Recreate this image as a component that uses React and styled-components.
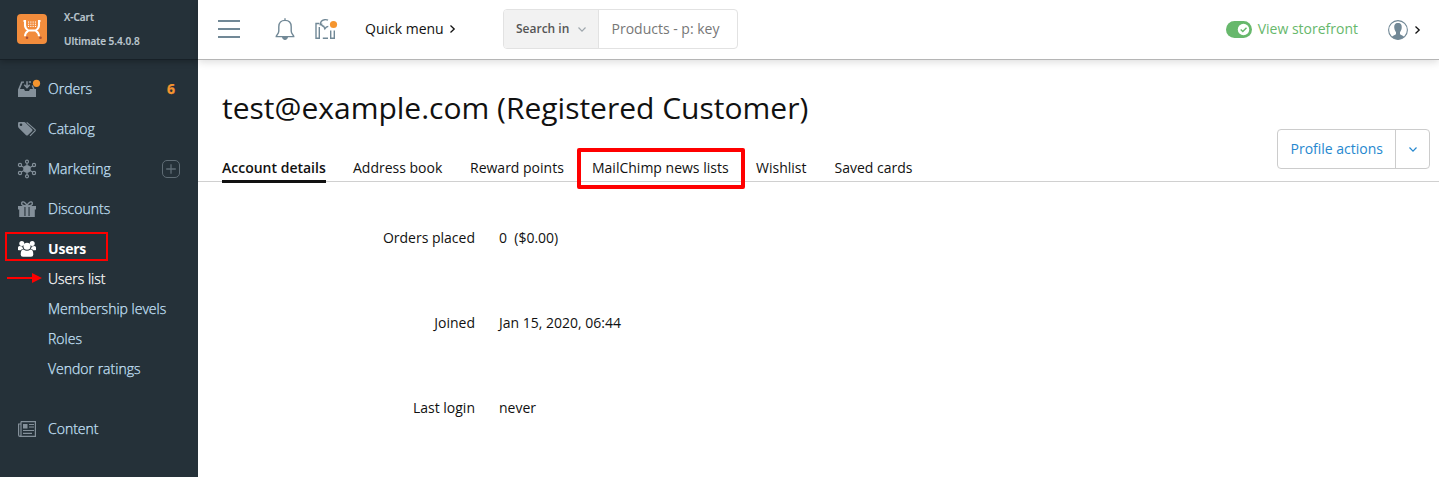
import React from "react";
import styled, { createGlobalStyle } from "styled-components";

const Global = createGlobalStyle`
  * { box-sizing: border-box; }
  html, body, #root { margin: 0; height: 100%; overflow: hidden; }
  body { font-family: "Open Sans", "Noto Sans", sans-serif; font-size: 14px; color: #111; background: #fff; }
  svg { display: block; flex: none; overflow: visible; }
`;

const Page = styled.div`
  display: flex;
  height: 477px;
  width: 1439px;
`;

const Sidebar = styled.aside`
  width: 198px;
  flex: none;
  background: #253139;
  color: #c5e0f8;
`;

const Brand = styled.div`
  display: flex;
  align-items: flex-start;
  height: 60px;
  padding: 14px 0 0 17px;
  border-bottom: 1px solid #172027;
  box-shadow: 0 2px 6px rgba(0, 0, 0, 0.25);
`;

const BrandText = styled.div`
  display: flex;
  flex-direction: column;
  gap: 8px;
  margin: -5px 0 0 17px;
  font-size: 10px;
  line-height: 16px;
  font-weight: 600;
  color: #bdc8d0;
  -webkit-text-stroke: 0.2px currentColor;
`;

const Nav = styled.nav`
  padding-top: 9px;
`;

const NavItem = styled.div`
  display: flex;
  align-items: center;
  position: relative;
  height: 40px;
  padding: 0 18px;
  color: ${(p) => (p.$active ? "#fff" : "#c5e0f8")};
  font-weight: ${(p) => (p.$active ? 700 : 300)};
  -webkit-text-stroke: ${(p) => (p.$active ? 0 : 0.25)}px currentColor;
  margin-top: ${(p) => p.$gap || 0}px;
`;

const NavLabel = styled.span`
  margin-left: 12px;
  padding-bottom: 2px;
  flex: 1;
  letter-spacing: ${(p) => p.$track || 0}px;
`;

const Count = styled.span`
  color: #f5952f;
  font-weight: 700;
  margin-right: 5px;
  padding-bottom: 2px;
`;

const SubItem = styled.div`
  height: 30px;
  line-height: 30px;
  padding-left: 48px;
  position: relative;
  font-weight: 300;
  color: ${(p) => (p.$active ? "#fff" : "#c5e0f8")};
  -webkit-text-stroke: 0.25px currentColor;
`;

const SubList = styled.div`
  margin-top: -5px;
`;

const Callout = styled.span`
  position: absolute;
  pointer-events: none;
  border: ${(p) => p.$line}px solid #f00;
  border-radius: ${(p) => p.$round || 0}px;
  top: ${(p) => p.$top}px;
  left: ${(p) => p.$left}px;
  width: ${(p) => p.$w}px;
  height: ${(p) => p.$h}px;
`;

const Arrow = styled.svg`
  position: absolute;
  left: 7px;
  top: 9px;
`;

const Main = styled.main`
  flex: 1;
  min-width: 0;
  background: #fff;
`;

const TopBar = styled.header`
  display: flex;
  align-items: center;
  height: 60px;
  padding: 0 19px 1px 20px;
  border-bottom: 1px solid #b5b5b5;
  box-shadow: 0 2px 8px rgba(0, 0, 0, 0.14);
`;

const QuickMenu = styled.div`
  display: flex;
  align-items: center;
  gap: 6px;
  width: 138px;
  margin-left: 27px;
`;

const BarText = styled.span`
  padding-bottom: 2px;
`;

const Search = styled.div`
  display: flex;
  width: 235px;
  height: 40px;
  border: 1px solid #e2e2e2;
  border-radius: 4px;
  overflow: hidden;
  line-height: 38px;
`;

const SearchScope = styled.div`
  display: flex;
  align-items: center;
  gap: 9px;
  width: 95px;
  padding-left: 12px;
  background: #f2f2f2;
  border-right: 1px solid #e2e2e2;
  color: #555;
  font-size: 12px;
  font-weight: 600;
`;

const SearchField = styled.div`
  padding-left: 12.5px;
  color: #777;
`;

const Storefront = styled.div`
  display: flex;
  align-items: center;
  gap: 6px;
  margin-left: auto;
  color: #67b86c;
`;

const Account = styled.div`
  display: flex;
  align-items: center;
  gap: 7px;
  margin-left: 30px;
  margin-top: 2px;
`;

const Heading = styled.div`
  display: flex;
  justify-content: space-between;
  height: 122px;
  padding: 0 9px 0 24px;
  border-bottom: 1px solid #d0d0d0;
`;

const Title = styled.h1`
  margin: 27px 0 0;
  height: 42px;
  font-size: 30px;
  line-height: 42px;
  font-weight: 400;
  white-space: nowrap;
`;

const Tabs = styled.div`
  display: flex;
  margin-top: 24px;
`;

const Tab = styled.div`
  position: relative;
  flex: none;
  height: 30px;
  line-height: 30px;
  white-space: nowrap;
  width: ${(p) => p.$w}px;
  margin-right: ${(p) => p.$gap}px;
  font-weight: ${(p) => (p.$active ? 600 : 400)};
  border-bottom: ${(p) => (p.$active ? "3px solid #111" : "0")};
`;

const SplitButton = styled.div`
  display: flex;
  align-items: center;
  margin-top: 69px;
  width: 153px;
  height: 40px;
  border: 1px solid #ccc;
  border-radius: 4px;
  color: #2688cf;
`;

const ButtonLabel = styled.span`
  width: 118px;
  height: 38px;
  line-height: 38px;
  padding-left: 12.5px;
  border-right: 1px solid #ccc;
  white-space: nowrap;
`;

const ButtonToggle = styled.span`
  flex: 1;
  display: flex;
  justify-content: center;
`;

const Details = styled.dl`
  display: grid;
  grid-template-columns: 277px 1fr;
  grid-auto-rows: 85px;
  column-gap: 24px;
  margin: 0;
  padding-top: 13px;
  line-height: 85px;
`;

const Term = styled.dt`
  text-align: right;
`;

const Value = styled.dd`
  margin: 0;
  white-space: pre;
`;

const Chevron = ({ down, color = "#111", w = 5, h = 8, line = 1.3 }) => (
  <svg width={down ? h : w} height={down ? w : h} fill="none" stroke={color} strokeWidth={line}>
    <path d={down ? `M.5 .5L${h / 2} ${w - 0.8}L${h - 0.5} .5` : `M.5 .5L${w - 0.8} ${h / 2}L.5 ${h - 0.5}`} />
  </svg>
);

const Logo = () => (
  <svg width="30" height="30" viewBox="0 0 30 30">
    <rect width="30" height="30" rx="4" fill="#f28c3c" />
    <path d="M6.5 7H8V11.2C8 13.8 9.4 15.2 11.3 16.5H18.7C20.6 15.2 22 13.8 22 11.2V7H23.5M11.3 16.7C9.1 18.2 8.2 19.5 8 22.3M18.7 16.7C20.9 18.2 21.8 19.5 22 22.3" fill="none" stroke="#fff" strokeWidth="2.1" />
    <g fill="#fff">
      {[7.5, 9.7, 11.9].map((y) => [11, 13.3, 15.6, 17.9].map((x) => <rect key={`${x}-${y}`} x={x} y={y} width="1.1" height="1.1" />))}
    </g>
    <circle cx="10" cy="23.7" r="1.3" fill="#a94f35" />
    <circle cx="23.5" cy="23.7" r="1.3" fill="#a94f35" />
  </svg>
);

const OrdersIcon = () => (
  <svg width="18" height="18" viewBox="0 0 18 18">
    <path d="M0 9.5L3.3 1.4H6V2.8H4.6L2 9H6L7 11H11L12 9H18V17H0Z" fill="#84909a" />
    <path d="M9 1.2V7M6.3 4.7L9 7.6L11.7 4.7M10.8 2H13M14.3 5.5L16 9.5" fill="none" stroke="#84909a" strokeWidth="1.5" />
    <circle cx="18.5" cy="3.3" r="3.6" fill="#f5952f" />
  </svg>
);

const CatalogIcon = () => (
  <svg width="18" height="18" viewBox="0 0 18 18">
    <path fillRule="evenodd" d="M0 3.2Q0 2 1.2 2L6 2.1Q7 2.2 7.8 3L14.2 9.2Q15 10 14.2 10.9L9.8 15.2Q9 16 8.1 15.2L1 8.3Q0 7.3 0 6ZM3 3.5A1.3 1.3 0 1 0 3 6.1A1.3 1.3 0 1 0 3 3.5Z" fill="#84909a" />
    <path d="M8.7 2.4L17 9.6Q17.5 10.2 17 10.8L12 15.8" fill="none" stroke="#84909a" strokeWidth="1.2" />
  </svg>
);

const MarketingIcon = () => (
  <svg width="18" height="18" viewBox="0 0 18 18" fill="none" stroke="#84909a" strokeWidth="1.2">
    <circle cx="9" cy="9" r="3.8" fill="#84909a" stroke="none" />
    <path d="M9 3V15M3.3 6L14.7 12M14.7 6L3.3 12" />
    <circle cx="9" cy="1.7" r="1.5" />
    <circle cx="9" cy="16.3" r="1.5" />
    <circle cx="2" cy="5" r="1.6" />
    <circle cx="16" cy="5" r="1.6" />
    <circle cx="2" cy="13" r="1.6" />
    <circle cx="16" cy="13" r="1.6" />
  </svg>
);

const GiftIcon = () => (
  <svg width="18" height="18" viewBox="0 0 18 18">
    <path d="M8.5 6C5 6 3.2 4.8 3.7 3C4.4 .7 7.5 2 9 5.5C10.5 2 13.6 .7 14.3 3C14.8 4.8 13 6 9.5 6" fill="none" stroke="#84909a" strokeWidth="1.4" />
    <path d="M0 6H6.4V9.5H0ZM11.6 6H18V9.5H11.6ZM1.2 9.5H6.4V17H1.2ZM11.6 9.5H16.8V17H11.6ZM7.5 6H10.5V17H7.5Z" fill="#84909a" />
    <path d="M6 16H12V17H6ZM6 5.8H12V7H6Z" fill="#84909a" />
  </svg>
);

const UsersIcon = () => (
  <svg width="18" height="18" viewBox="0 0 18 18" fill="#fff">
    <circle cx="3.8" cy="3.4" r="2.5" />
    <circle cx="14.2" cy="3.4" r="2.5" />
    <path d="M0 10V7.5Q0 6 1.5 6L4.3 6.4Q4.5 8.2 5.4 9.1Q3.7 9 2.8 10.3H.8ZM18 10V7.5Q18 6 16.5 6L13.7 6.4Q13.5 8.2 12.6 9.1Q14.3 9 15.2 10.3H17.2Z" />
    <circle cx="9" cy="6.2" r="3.5" />
    <path d="M2.7 14.5Q2.7 9.7 5.4 9.6Q9 12 12.6 9.6Q15.3 9.7 15.3 14.5Q15.3 16.8 13 16.8H5Q2.7 16.8 2.7 14.5Z" />
  </svg>
);

const ContentIcon = () => (
  <svg width="18" height="18" viewBox="0 0 18 18" fill="none" stroke="#84909a" strokeWidth="1.2">
    <path d="M3 1.6H17.4V16.4H2Q.6 16.4 .6 15V4H3M3 1.6V15Q3 16.4 2 16.4M11 4.5H16M11 7H16M5 10.5H16M5 13.3H14" />
    <path d="M5 4H9.5V8.5H5Z" fill="#84909a" stroke="none" />
  </svg>
);

const PlusIcon = () => (
  <svg width="18" height="18" viewBox="0 0 18 18" fill="none" stroke="#5f6c75">
    <rect x=".5" y=".5" width="17" height="17" rx="4.5" />
    <path d="M9 4.2V13.8M4.2 9H13.8" strokeWidth="1.3" />
  </svg>
);

const MenuIcon = () => (
  <svg width="22" height="18" viewBox="0 0 22 18" fill="#718896">
    <path d="M0 0H22V2H0ZM0 8H22V10H0ZM0 16H22V18H0Z" />
  </svg>
);

const BellIcon = styled(({ className }) => (
  <svg className={className} width="20" height="22" viewBox="0 0 20 22" fill="none" stroke="#718896" strokeWidth="1.4">
    <path d="M10 .2V2.5M1.2 18.6C1 17.2 3.8 16.5 3.8 13V8.7C3.8 4.8 6.3 2.4 10 2.4S16.2 4.8 16.2 8.7V13C16.2 16.5 19 17.2 18.8 18.6Z" />
    <path d="M7.7 19Q8 21.2 10 21.2T12.3 19" fill="#718896" />
  </svg>
))`
  margin-left: 35px;
`;

const NewsIcon = styled(({ className }) => (
  <svg className={className} width="23" height="22" viewBox="0 0 23 22" fill="none" stroke="#718896" strokeWidth="1.4">
    <path d="M4.3 9V20.2H1V5.5H4.3M5.2 7.5C5.2 4.3 6.8 2.3 9.3 1.8Q11.3 1.3 13 2.2M6.7 5.5Q6.3 8.2 8.7 8.2L9.8 10.8Q11 8.7 13.3 8.4M15.7 12.5V20.2H19.3V12.5M7.8 20.2H13" />
    <circle cx="18.5" cy="6.5" r="3.6" fill="#f5952f" stroke="none" />
  </svg>
))`
  margin-left: 20px;
`;

const ToggleIcon = () => (
  <svg width="26" height="17" viewBox="0 0 26 17">
    <rect width="26" height="17" rx="8.5" fill="#67b86c" />
    <circle cx="17.5" cy="8.5" r="5.7" fill="#fff" />
    <path d="M14.7 8.6L16.8 10.6L20.5 6.7" fill="none" stroke="#67b86c" strokeWidth="1.4" />
  </svg>
);

const AvatarIcon = () => (
  <svg width="20" height="20" viewBox="0 0 20 20">
    <circle cx="10" cy="10" r="9.4" fill="#fff" stroke="#718896" strokeWidth="1.1" />
    <path d="M10 3C7 3 6 5 6.3 8C6.5 10.3 7.5 11 8 12.3V14C7.5 15.3 5 15.3 3.8 17Q10 22 16.2 17C15 15.3 12.5 15.3 12 14V12.3C12.5 11 13.5 10.3 13.7 8C14 5 13 3 10 3Z" fill="#718896" />
  </svg>
);

const tabs = [
  { label: "Account details", w: 104, gap: 27, active: true },
  { label: "Address book", w: 90, gap: 27 },
  { label: "Reward points", w: 94, gap: 28 },
  { label: "MailChimp news lists", w: 137, gap: 27, marked: true },
  { label: "Wishlist", w: 51, gap: 27.5 },
  { label: "Saved cards", w: 78, gap: 0 },
];

export default function App() {
  return (
    <Page>
      <Global />
      <Sidebar>
        <Brand>
          <Logo />
          <BrandText>
            <span>X-Cart</span>
            <span>Ultimate 5.4.0.8</span>
          </BrandText>
        </Brand>
        <Nav>
          <NavItem><OrdersIcon /><NavLabel>Orders</NavLabel><Count>6</Count></NavItem>
          <NavItem><CatalogIcon /><NavLabel>Catalog</NavLabel></NavItem>
          <NavItem><MarketingIcon /><NavLabel>Marketing</NavLabel><PlusIcon /></NavItem>
          <NavItem><GiftIcon /><NavLabel>Discounts</NavLabel></NavItem>
          <NavItem $active>
            <UsersIcon /><NavLabel $track={-0.2}>Users</NavLabel>
            <Callout $line={2} $top={3} $left={5} $w={103} $h={29} />
          </NavItem>
          <SubList>
            <SubItem $active>
              <Arrow width="35" height="10" viewBox="0 0 35 10" fill="#f00">
                <path d="M0 4H25V0L35 5L25 10V6H0Z" />
              </Arrow>
              Users list
            </SubItem>
            <SubItem>Membership levels</SubItem>
            <SubItem>Roles</SubItem>
            <SubItem>Vendor ratings</SubItem>
          </SubList>
          <NavItem $gap={25}><ContentIcon /><NavLabel>Content</NavLabel></NavItem>
        </Nav>
      </Sidebar>
      <Main>
        <TopBar>
          <MenuIcon />
          <BellIcon />
          <NewsIcon />
          <QuickMenu><BarText>Quick menu</BarText><Chevron /></QuickMenu>
          <Search>
            <SearchScope>Search in <Chevron down color="#a0a8ae" line={1.2} /></SearchScope>
            <SearchField>Products - p: key</SearchField>
          </Search>
          <Storefront><ToggleIcon /><BarText>View storefront</BarText></Storefront>
          <Account><AvatarIcon /><Chevron /></Account>
        </TopBar>
        <Heading>
          <div>
            <Title>test@example.com (Registered Customer)</Title>
            <Tabs>
              {tabs.map((t) => (
                <Tab key={t.label} $w={t.w} $gap={t.gap} $active={t.active}>
                  {t.label}
                  {t.marked && <Callout $line={4} $round={2} $top={-5} $left={-15} $w={168} $h={41} />}
                </Tab>
              ))}
            </Tabs>
          </div>
          <SplitButton>
            <ButtonLabel>Profile actions</ButtonLabel>
            <ButtonToggle><Chevron down color="#2688cf" w={5} line={1.2} /></ButtonToggle>
          </SplitButton>
        </Heading>
        <Details>
          <Term>Orders placed</Term><Value>{"0  ($0.00)"}</Value>
          <Term>Joined</Term><Value>Jan 15, 2020, 06:44</Value>
          <Term>Last login</Term><Value>never</Value>
        </Details>
      </Main>
    </Page>
  );
}
